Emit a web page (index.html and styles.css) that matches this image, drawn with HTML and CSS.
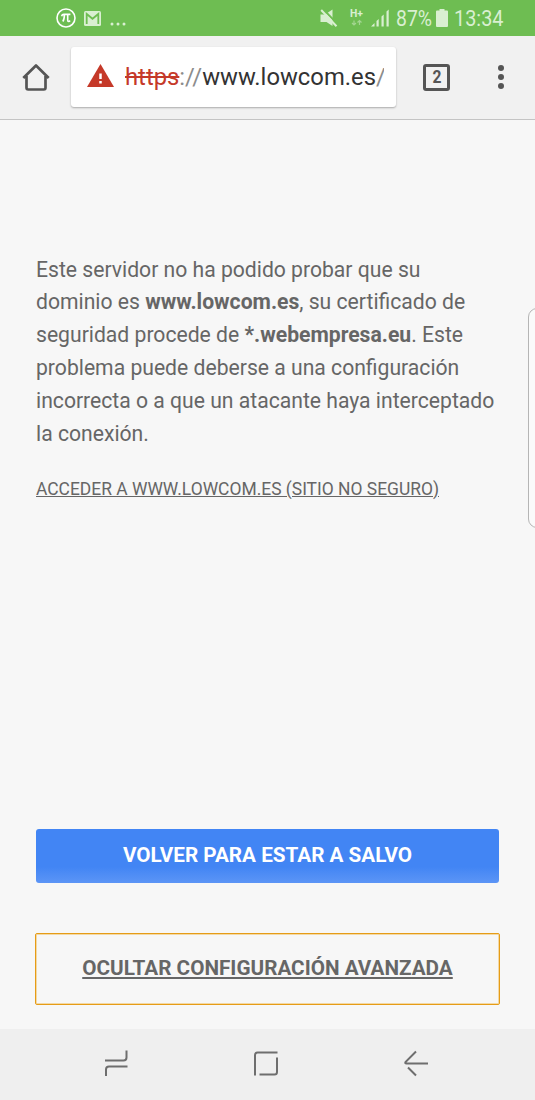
FILE: index.html
```html
<!DOCTYPE html>
<html lang="es">
  <head>
    <meta charset="UTF-8" />
    <title>Error de privacidad</title>
    <link rel="stylesheet" href="styles.css" />
  </head>
  <body>
    <header class="status-bar">
      <div class="notifications">
        <svg width="20" height="20" viewBox="0 0 20 20" fill="none" stroke="currentColor">
          <circle cx="10" cy="10" r="9" stroke-width="1.6" />
          <path d="M5.6 8.2C6 6.7 6.6 6.4 7.8 6.4H14.4M8.4 6.6C8.4 9.5 8.1 12 6.8 13.6M11.7 6.6V12.2C11.7 13.8 13.2 13.9 14 12.5" stroke-width="1.6" />
        </svg>
        <svg class="mail" width="17" height="15" viewBox="0 0 17 15">
          <rect width="17" height="15" rx="1.5" fill="currentColor" />
          <path d="M2.7 13V3L8.5 7.8L14.3 3V13" fill="none" stroke="#6ebd52" stroke-width="1.8" />
        </svg>
        <svg class="more" width="16" height="4" viewBox="0 0 16 4" fill="currentColor">
          <circle cx="2" cy="2" r="1.5" />
          <circle cx="8" cy="2" r="1.5" />
          <circle cx="14" cy="2" r="1.5" />
        </svg>
      </div>
      <div class="system">
        <svg width="17" height="19" viewBox="0 0 17 19">
          <path d="M0.5 5.5H5L12.5 0.5V17L6.5 13H0.5z" fill="currentColor" />
          <path d="M3 0L18 15.5" stroke="#6ebd52" stroke-width="1.8" />
          <path d="M1.2 1L16.5 17.2" stroke="currentColor" stroke-width="2" />
        </svg>
        <svg class="network" width="14" height="18" viewBox="0 0 14 18">
          <text x="0" y="8" textLength="13" lengthAdjust="spacingAndGlyphs">H+</text>
          <path d="M4 11.5V16M2 14L4 16L6 14M9.5 16V11.5M7.5 13.5L9.5 11.5L11.5 13.5" fill="none" stroke="currentColor" stroke-width="1.2" opacity="0.5" />
        </svg>
        <svg class="signal" width="18" height="18" viewBox="0 0 18 18" fill="currentColor">
          <path d="M0 17.5L3.5 14V17.5zM5.5 12L7.7 10V17.5H5.5zM10.5 7.5L12.7 5.5V17.5H10.5zM15.5 2.5L17.7 0.5V17.5H15.5z" />
        </svg>
        <svg class="percent" width="36" height="24" viewBox="0 0 36 24">
          <text x="0" y="20" textLength="36" lengthAdjust="spacingAndGlyphs">87%</text>
        </svg>
        <svg class="battery" width="12" height="18" viewBox="0 0 12 18" fill="currentColor">
          <path d="M3.5 0H8.5V1.6H11Q12 1.6 12 2.6V17Q12 18 11 18H1Q0 18 0 17V2.6Q0 1.6 1 1.6H3.5z" />
        </svg>
        <svg class="clock" width="50" height="24" viewBox="0 0 50 24">
          <text x="0" y="20" textLength="49.5" lengthAdjust="spacingAndGlyphs">13:34</text>
        </svg>
      </div>
    </header>

    <div class="toolbar">
      <svg class="home" width="28" height="28" viewBox="0 0 28 28" fill="none" stroke="currentColor" stroke-width="2.7" stroke-linejoin="round">
        <path d="M1.3 15L14 2.5L26.7 15M4.5 13V24.8Q4.5 26.5 6.2 26.5H21.8Q23.5 26.5 23.5 24.8V13" />
      </svg>
      <div class="address">
        <svg class="warning" width="27" height="23" viewBox="0 0 27 23">
          <path d="M13.5 0L27 23H0z" fill="#c53929" />
          <path d="M13.5 9.5V15M13.5 17V19.6" stroke="#fff" stroke-width="2.5" />
        </svg>
        <div class="url"><span class="scheme">https</span><span class="muted">://</span>www.lowcom.es<span class="muted">/</span></div>
      </div>
      <div class="tabs">
        <svg width="10" height="16" viewBox="0 0 10 16">
          <text x="0.5" y="14" textLength="9" lengthAdjust="spacingAndGlyphs">2</text>
        </svg>
      </div>
      <svg class="menu" width="6" height="24" viewBox="0 0 6 24" fill="currentColor">
        <circle cx="3" cy="3" r="3" />
        <circle cx="3" cy="12" r="3" />
        <circle cx="3" cy="21" r="3" />
      </svg>
    </div>

    <main class="content">
      <p class="message">
        Este servidor no ha podido probar que su<br />
        dominio es <b>www.lowcom.es</b>, su certificado de<br />
        seguridad procede de <b>*.webempresa.eu</b>. Este<br />
        problema puede deberse a una configuración<br />
        incorrecta o a que un atacante haya interceptado<br />
        la conexión.
      </p>
      <a class="proceed">ACCEDER A WWW.LOWCOM.ES (SITIO NO SEGURO)</a>
      <div class="actions">
        <button class="primary">VOLVER PARA ESTAR A SALVO</button>
        <button class="details">OCULTAR CONFIGURACIÓN AVANZADA</button>
      </div>
      <div class="edge-handle"></div>
    </main>

    <nav class="nav-bar">
      <svg width="26" height="28" viewBox="0 0 26 28">
        <path d="M2 11.5H20.5Q23.5 11.5 23.5 8.5V1.5M3 27V20.5Q3 17.5 6 17.5H24.5" />
      </svg>
      <svg width="26" height="28" viewBox="0 0 26 28">
        <path d="M2 26.5V6Q2 3.5 4.5 3.5H24.5M24 8.5V23Q24 25.5 21.5 25.5H6.5" />
      </svg>
      <svg width="26" height="28" viewBox="0 0 26 28">
        <path d="M13 2.5L2.5 13Q1.7 14.5 3.5 14.5H25M5 18.5L13 26.5" />
      </svg>
    </nav>
  </body>
</html>
```
FILE: styles.css
```css
* {
  box-sizing: border-box;
}

body {
  margin: 0;
  height: 1100px;
  display: flex;
  flex-direction: column;
  overflow: hidden;
  background-color: #f7f7f7;
  color: #666;
  font-family: Roboto, sans-serif;
}

svg {
  display: block;
  flex: none;
  overflow: visible;
}

.status-bar {
  height: 36px;
  padding: 0 31px 0 56px;
  display: flex;
  justify-content: space-between;
  align-items: center;
  background-color: #6ebd52;
  color: #d9efd1;
}

.notifications,
.system {
  display: flex;
  align-items: center;
}

.notifications svg:first-child {
  color: #fff;
}

.mail {
  margin-left: 8px;
}

.more {
  margin: 12px 0 0 9px;
}

.system text {
  fill: currentColor;
  font-size: 22px;
}

.system .network text {
  font-size: 11px;
  font-weight: 700;
}

.network {
  margin-left: 13px;
}

.signal {
  margin-left: 7px;
}

.percent {
  margin-left: 7px;
}

.battery {
  margin-left: 4px;
}

.clock {
  margin-left: 6px;
}

.toolbar {
  height: 84px;
  padding: 0 31px 1px 22px;
  display: flex;
  align-items: center;
  background-color: #f1f1f1;
  border-bottom: 1px solid #c4c4c4;
  color: #555;
}

.address {
  width: 325px;
  height: 60px;
  margin-left: 21px;
  padding: 0 12px 0 16px;
  display: flex;
  align-items: center;
  background-color: #fff;
  border-radius: 3px;
  box-shadow: 0 1px 2px rgba(0, 0, 0, 0.3);
}

.warning {
  margin-bottom: 3px;
}

.url {
  margin-left: 11px;
  overflow: hidden;
  white-space: nowrap;
  font-size: 23.8px;
  color: #333;
}

.scheme {
  color: #c53929;
  text-decoration: line-through;
}

.muted {
  color: #8c8c8c;
}

.tabs {
  width: 27px;
  height: 27px;
  margin-left: 27px;
  display: flex;
  justify-content: center;
  align-items: center;
  border: 3px solid #555;
  border-radius: 3px;
}

.tabs text {
  fill: currentColor;
  font-size: 17.5px;
  font-weight: 700;
}

.menu {
  margin-left: auto;
}

.content {
  position: relative;
  flex: 1;
  padding: 133.6px 36px 24px 36px;
  display: flex;
  flex-direction: column;
  align-items: flex-start;
}

.message {
  margin: 0;
  font-size: 21.15px;
  line-height: 32.8px;
  white-space: nowrap;
}

.proceed {
  margin-top: 26.4px;
  font-size: 17.43px;
  line-height: 24px;
  white-space: nowrap;
  text-decoration: underline;
}

.actions {
  width: 100%;
  margin-top: auto;
  display: flex;
  flex-direction: column;
  gap: 50px;
}

button {
  padding: 0 0 3px;
  border: none;
  font-family: inherit;
  font-size: 20.7px;
  font-weight: 700;
}

.primary {
  height: 54px;
  border-radius: 3px;
  background: linear-gradient(#4285f4 70%, #5c95f6);
  color: #fff;
}

.details {
  height: 72px;
  margin: 0 -1px;
  border: 1px solid #e69c17;
  box-shadow: inset 0 0 0 1px #f3d9a5;
  border-radius: 2px;
  background: none;
  color: #666;
  text-decoration: underline;
}

/* edge panel tab, runs off the right side of the screen */
.edge-handle {
  position: absolute;
  top: 188px;
  right: -12px;
  width: 19px;
  height: 220px;
  border: 1px solid #b5b5b5;
  border-radius: 9px;
  background-color: #fafafa;
}

.nav-bar {
  height: 71px;
  padding: 0 106px 3px 103px;
  display: flex;
  justify-content: space-between;
  align-items: center;
  background-color: #efefef;
}

.nav-bar path {
  fill: none;
  stroke: #6e6e6e;
  stroke-width: 2;
}
```
